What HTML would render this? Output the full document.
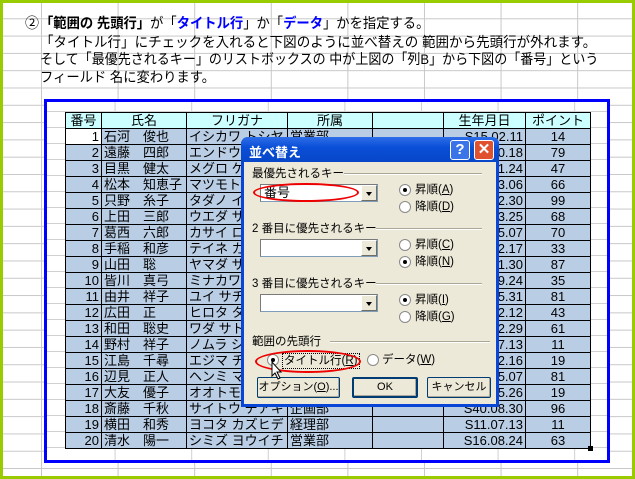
<!DOCTYPE html>
<html><head><meta charset="utf-8"><style>
*{margin:0;padding:0;box-sizing:border-box}
body{width:635px;height:479px;overflow:hidden;position:relative;background:#fff;font-family:"Liberation Sans","Noto Sans CJK JP",sans-serif;}
#frame{position:absolute;left:0;top:0;width:635px;height:479px;border:3px solid #99cc00;
background-image:linear-gradient(90deg,#c8c8c8 1px,transparent 1px),linear-gradient(#c8c8c8 1px,transparent 1px);
background-size:76.6px 100%,100% 17.3px;background-position:38px 0,0 -2px;}
.t{position:absolute;font-size:14px;color:#000;white-space:nowrap;line-height:17px;transform-origin:0 0}
.b{color:#0000ff;font-weight:bold}
#blue{position:absolute;left:44px;top:99px;width:566px;height:364px;border:3px solid #0000ff;background:#fff;
background-image:linear-gradient(90deg,#d0d0d0 1px,transparent 1px),linear-gradient(#d0d0d0 1px,transparent 1px);background-size:76.6px 100%,100% 16px;background-position:-9px 0,0 9px}
table{position:absolute;left:65px;top:112px;border-collapse:collapse;font-size:13px;line-height:14px;table-layout:fixed}
td{border:1px solid #000;height:16px;padding:0 2px;background:#b9cde5;white-space:nowrap;overflow:hidden}
tr.h td{background:#ccffff;text-align:center}
td.n{text-align:right}
td.c{text-align:center}
td.r{text-align:right}
#dlg{position:absolute;left:241px;top:137px;width:258px;height:270px;background:#ece9d8;border:3px solid #0a46d6;border-top:none;border-radius:7px 7px 0 0;font-size:11.5px}
#tb{position:absolute;left:-3px;top:0;width:258px;height:25px;background:linear-gradient(#2f6ee8,#0a4fd8 40%,#0746c8);border-radius:7px 7px 0 0;color:#fff;font-weight:bold;font-size:13px;padding:5px 8px}
.tbb{position:absolute;top:3px;width:20px;height:20px;border:1px solid #fff;border-radius:3px;color:#fff;text-align:center;font-size:15px;line-height:18px;font-weight:bold}
.l{position:absolute;white-space:nowrap;line-height:14px}
.ln{position:absolute;height:2px;border-top:1px solid #aca899;border-bottom:1px solid #fff}
.cb{position:absolute;width:118px;height:18px;background:#fff;border:1px solid #7f9db9;border-top-color:#7a7a7a;border-left-color:#7a7a7a;font-size:13px;padding-left:3px;line-height:16px}
.cb i{position:absolute;right:0;top:0;width:16px;height:16px;background:#ece9d8;border:1px solid;border-color:#fff #716f64 #716f64 #fff}
.cb i:after{content:"";position:absolute;left:4px;top:6px;border:3px solid transparent;border-top:4px solid #000}
.rd{position:absolute;width:12px;height:12px;border-radius:50%;background:#fff;border:1px solid #8a8a8a}
.rd.on:after{content:"";position:absolute;left:3px;top:3px;width:4px;height:4px;border-radius:50%;background:#000}
.btn{position:absolute;height:21px;background:#ece9d8;border:1px solid #003c74;border-radius:2px;text-align:center;line-height:19px;font-size:11px;box-shadow:inset -1px -1px #aca899;white-space:nowrap;overflow:hidden}
.ell{position:absolute;border:2px solid #e00;border-radius:50%}
</style></head><body>
<div id="frame"></div>
<div class="t" style="left:25px;top:15px">②</div>
<div class="t" style="left:40px;top:15px;transform:scaleX(.95)"><b>「範囲の 先頭行」</b>が「<span class="b">タイトル行</span>」か「<span class="b">データ</span>」かを指定する。</div>
<div class="t" style="left:40px;top:34px;transform:scaleX(.965)">「タイトル行」にチェックを入れると下図のように並べ替えの 範囲から先頭行が外れます。</div>
<div class="t" style="left:40px;top:51px;transform:scaleX(.93)">そして「最優先されるキー」のリストボックスの 中が上図の「列B」から下図の「番号」という</div>
<div class="t" style="left:40px;top:69px;transform:scaleX(.95)">フィールド 名に変わります。</div>
<div id="blue"></div>
<table>
<colgroup><col style="width:36px"><col style="width:85px"><col style="width:101px"><col style="width:85px"><col style="width:71px"><col style="width:82px"><col style="width:65px"></colgroup>
<tr class="h"><td>番号</td><td>氏名</td><td>フリガナ</td><td>所属</td><td></td><td>生年月日</td><td>ポイント</td></tr>
<tr><td class="n" style="background:#fff">1</td><td>石河　俊也</td><td>イシカワ トシヤ</td><td>営業部</td><td></td><td class="r">S15.02.11</td><td class="c">14</td></tr>
<tr><td class="n">2</td><td>遠藤　四郎</td><td>エンドウ シロウ</td><td>営業部</td><td></td><td class="r">S20.10.18</td><td class="c">79</td></tr>
<tr><td class="n">3</td><td>目黒　健太</td><td>メグロ ケンタ</td><td>企画部</td><td></td><td class="r">S30.11.24</td><td class="c">47</td></tr>
<tr><td class="n">4</td><td>松本　知恵子</td><td>マツモト チエコ</td><td>経理部</td><td></td><td class="r">S25.03.06</td><td class="c">66</td></tr>
<tr><td class="n">5</td><td>只野　糸子</td><td>タダノ イトコ</td><td>営業部</td><td></td><td class="r">S33.12.30</td><td class="c">99</td></tr>
<tr><td class="n">6</td><td>上田　三郎</td><td>ウエダ サブロウ</td><td>企画部</td><td></td><td class="r">S28.03.25</td><td class="c">68</td></tr>
<tr><td class="n">7</td><td>葛西　六郎</td><td>カサイ ロクロウ</td><td>経理部</td><td></td><td class="r">S31.05.07</td><td class="c">70</td></tr>
<tr><td class="n">8</td><td>手稲　和彦</td><td>テイネ カズヒコ</td><td>営業部</td><td></td><td class="r">S22.02.17</td><td class="c">33</td></tr>
<tr><td class="n">9</td><td>山田　聡</td><td>ヤマダ サトシ</td><td>企画部</td><td></td><td class="r">S41.01.30</td><td class="c">87</td></tr>
<tr><td class="n">10</td><td>皆川　真弓</td><td>ミナカワ マユミ</td><td>経理部</td><td></td><td class="r">S36.09.24</td><td class="c">35</td></tr>
<tr><td class="n">11</td><td>由井　祥子</td><td>ユイ サチコ</td><td>営業部</td><td></td><td class="r">S27.05.31</td><td class="c">81</td></tr>
<tr><td class="n">12</td><td>広田　正</td><td>ヒロタ タダシ</td><td>企画部</td><td></td><td class="r">S19.12.12</td><td class="c">43</td></tr>
<tr><td class="n">13</td><td>和田　聡史</td><td>ワダ サトシ</td><td>経理部</td><td></td><td class="r">S44.02.29</td><td class="c">61</td></tr>
<tr><td class="n">14</td><td>野村　祥子</td><td>ノムラ ショウコ</td><td>営業部</td><td></td><td class="r">S38.07.13</td><td class="c">11</td></tr>
<tr><td class="n">15</td><td>江島　千尋</td><td>エジマ チヒロ</td><td>企画部</td><td></td><td class="r">S26.12.16</td><td class="c">19</td></tr>
<tr><td class="n">16</td><td>辺見　正人</td><td>ヘンミ マサト</td><td>経理部</td><td></td><td class="r">S34.05.07</td><td class="c">81</td></tr>
<tr><td class="n">17</td><td>大友　優子</td><td>オオトモ ユウコ</td><td>営業部</td><td></td><td class="r">S29.05.26</td><td class="c">19</td></tr>
<tr><td class="n">18</td><td>斎藤　千秋</td><td>サイトウ チアキ</td><td>企画部</td><td></td><td class="r">S40.08.30</td><td class="c">96</td></tr>
<tr><td class="n">19</td><td>横田　和秀</td><td>ヨコタ カズヒデ</td><td>経理部</td><td></td><td class="r">S11.07.13</td><td class="c">11</td></tr>
<tr><td class="n">20</td><td>清水　陽一</td><td>シミズ ヨウイチ</td><td>営業部</td><td></td><td class="r">S16.08.24</td><td class="c">63</td></tr>
</table>
<div id="dlg">
<div id="tb">並べ替え</div>
<div class="tbb" style="left:206px;background:#3a74e8">?</div>
<div class="tbb" style="left:230px;background:#e0522f">✕</div>
<div class="l" style="left:8px;top:30px">最優先されるキー</div><div class="ln" style="left:100px;top:36px;width:138px"></div>
<div class="cb" style="left:16px;top:47px">番号<i></i></div>
<div class="rd on" style="left:155px;top:47px"></div><div class="l" style="left:171px;top:46px">昇順(<u>A</u>)</div>
<div class="rd" style="left:155px;top:64px"></div><div class="l" style="left:171px;top:63px">降順(<u>D</u>)</div>
<div class="l" style="left:8px;top:85px">2 番目に優先されるキー</div><div class="ln" style="left:132px;top:91px;width:106px"></div>
<div class="cb" style="left:16px;top:102px"><i></i></div>
<div class="rd" style="left:155px;top:102px"></div><div class="l" style="left:171px;top:101px">昇順(<u>C</u>)</div>
<div class="rd on" style="left:155px;top:119px"></div><div class="l" style="left:171px;top:118px">降順(<u>N</u>)</div>
<div class="l" style="left:8px;top:140px">3 番目に優先されるキー</div><div class="ln" style="left:132px;top:146px;width:106px"></div>
<div class="cb" style="left:16px;top:157px"><i></i></div>
<div class="rd on" style="left:155px;top:157px"></div><div class="l" style="left:171px;top:156px">昇順(<u>I</u>)</div>
<div class="rd" style="left:155px;top:174px"></div><div class="l" style="left:171px;top:173px">降順(<u>G</u>)</div>
<div class="l" style="left:8px;top:198px">範囲の先頭行</div><div class="ln" style="left:86px;top:204px;width:160px"></div>
<div class="rd on" style="left:23px;top:217px"></div><div class="l" style="left:38px;top:216px;border:1px dotted #000;padding:0 1px">タイトル行(<u>R</u>)</div>
<div class="rd" style="left:123px;top:217px"></div><div class="l" style="left:138px;top:216px">データ(<u>W</u>)</div>
<div class="btn" style="left:13px;top:240px;width:83px">オプション(<u>O</u>)...</div>
<div class="btn" style="left:108px;top:240px;width:66px;border-width:2px;line-height:17px">OK</div>
<div class="btn" style="left:183px;top:240px;width:64px">キャンセル</div>
</div>
<div class="ell" style="left:253px;top:183px;width:106px;height:19px"></div>
<div class="ell" style="left:255px;top:350px;width:106px;height:23px"></div>
<svg style="position:absolute;left:271px;top:361px" width="12" height="20"><path d="M1 1 L1 15 L4 12 L7 18 L9 17 L6 11 L10 11 Z" fill="#fff" stroke="#000"/></svg>
<div style="position:absolute;left:588px;top:446px;width:5px;height:5px;background:#000"></div>
</body></html>
